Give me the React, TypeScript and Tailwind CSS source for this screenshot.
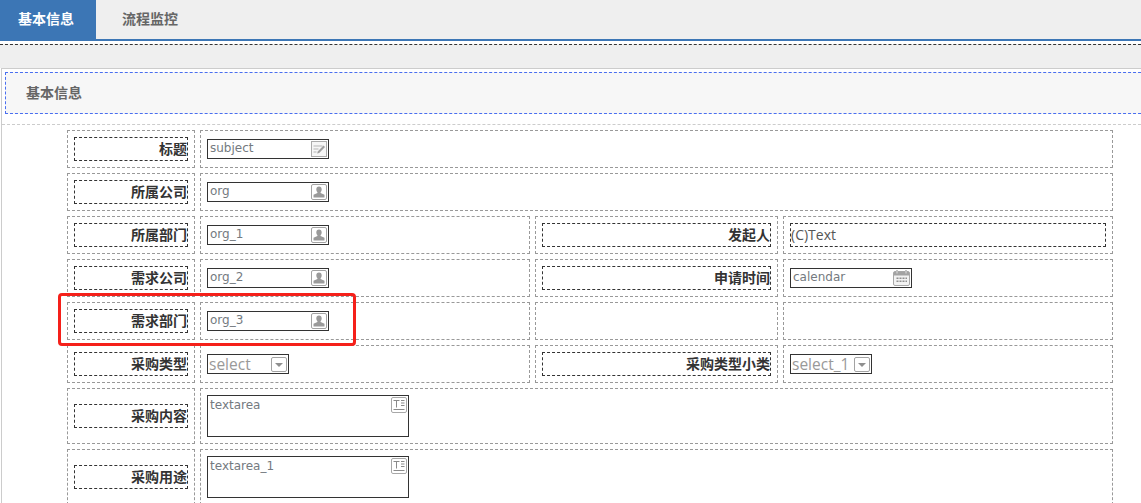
import React from 'react';

const CJK = '"Liberation Sans", "Noto Sans CJK SC", sans-serif';

const PersonIcon = () => (
  <svg width="16" height="16" viewBox="0 0 16 16" className="shrink-0">
    <rect x="0.5" y="0.5" width="15" height="15" rx="1.5" fill="#fff" stroke="#a3a3a3" />
    <path d="M8 2.500c-1.800 0-2.700 1.200-2.700 2.900 0 1.200.5 2.100 1.100 2.700v1L2.500 10.800v2.700h11v-2.700L9.600 9.100v-1c.6-.6 1.100-1.500 1.100-2.700C10.700 3.700 9.800 2.500 8 2.500z" fill="#9a9a9a" />
  </svg>
);

const EditIcon = () => (
  <svg width="16" height="16" viewBox="0 0 16 16" className="shrink-0">
    <rect x="0.5" y="0.5" width="15" height="15" fill="#f6f6f6" stroke="#ababab" />
    <path d="M2.500 5h9M2.500 8h5M2.500 11h3" stroke="#b5b5b5" strokeWidth="1" />
    <path d="M6 12.500l1-2.200L12.500 4.500 14 6l-5.800 6z" fill="#a0a0a0" />
  </svg>
);

const CalendarIcon = () => (
  <svg width="17" height="16" viewBox="0 0 17 16" className="shrink-0">
    <rect x="0.5" y="1.500" width="16" height="14" rx="1.500" fill="#f2f2f2" stroke="#a8a8a8" />
    <rect x="1" y="2" width="15" height="3.500" fill="#a3a3a3" />
    <rect x="3" y="0" width="2" height="3.500" fill="#c2c2c2" />
    <rect x="12" y="0" width="2" height="3.500" fill="#c2c2c2" />
    <path d="M3.500 7.500h2V9h-2zM6.500 7.500h2V9h-2zM9.500 7.500h2V9h-2zM12.500 7.500h1.500V9h-1.500zM3.500 10.500h2V12h-2zM6.500 10.500h2V12h-2zM9.500 10.500h2V12h-2zM12.500 10.500h1.500V12h-1.500z" fill="#8f8f8f" />
  </svg>
);

const SelectIcon = () => (
  <svg width="16" height="15" viewBox="0 0 16 15" className="shrink-0">
    <rect x="0.5" y="0.5" width="15" height="14" rx="1.500" fill="#fff" stroke="#a3a3a3" />
    <path d="M4 6h8l-4 4z" fill="#8f8f8f" />
  </svg>
);

const TextareaIcon = () => (
  <svg width="16" height="16" viewBox="0 0 16 16" className="shrink-0">
    <rect x="0.5" y="0.5" width="15" height="15" rx="1.500" fill="#fff" stroke="#a8a8a8" />
    <path d="M2.500 3.500h6M5.500 3.500v7M10 3.500h3.500M10 6h3.500M10 8.500h3.500M2.500 12.500h11" stroke="#8a8a8a" strokeWidth="1" fill="none" />
  </svg>
);

const Label = ({ children }: { children: React.ReactNode }) => (
  <div className="w-full h-[24px] border border-dashed border-[#333] flex items-center justify-end text-[14px] font-bold text-[#333] leading-none">
    {children}
  </div>
);

const LabelCell = ({ text, className = 'w-[128px] px-[6px]' }: { text: string; className?: string }) => (
  <div className={`${className} shrink-0 h-full border border-dashed border-[#999] flex items-center`}>
    <Label>{text}</Label>
  </div>
);

const FieldText = ({ children }: { children: React.ReactNode }) => (
  <span className="text-[12px] text-[#747a80] pl-[2px] pb-[2px] leading-none" style={{ fontFamily: '"DejaVu Sans", sans-serif' }}>
    {children}
  </span>
);

const Input = ({ text, icon }: { text: string; icon: React.ReactNode }) => (
  <div className="w-[122px] h-[20px] border border-[#333] flex items-center justify-between pr-px bg-white">
    <FieldText>{text}</FieldText>
    {icon}
  </div>
);

const Select = ({ text, width }: { text: string; width: string }) => (
  <div className={`${width} h-[20px] border border-[#333] flex items-center justify-between pr-px bg-white`}>
    <span className="text-[15.5px] text-[#999] pl-px pt-[2px] leading-none" style={{ fontFamily: '"Open Sans", sans-serif' }}>{text}</span>
    <SelectIcon />
  </div>
);

const Textarea = ({ text }: { text: string }) => (
  <div className="w-[202px] h-[42px] border border-[#333] flex justify-between pt-px pr-px bg-white">
    <span className="text-[12px] text-[#747a80] pl-[2px] pt-px leading-[14px]" style={{ fontFamily: '"DejaVu Sans", sans-serif' }}>{text}</span>
    <TextareaIcon />
  </div>
);

const ValueCell = ({ children, className }: { children?: React.ReactNode; className: string }) => (
  <div className={`${className} shrink-0 h-full border border-dashed border-[#999] flex items-center px-[6px]`}>{children}</div>
);

const Row = ({ children, height = 'h-[38px]' }: { children: React.ReactNode; height?: string }) => (
  <div className={`${height} flex gap-[5px]`}>{children}</div>
);

const FourCols = ({ label, value, label2, value2 }: { label: string; value: React.ReactNode; label2?: string; value2?: React.ReactNode }) => (
  <Row>
    <LabelCell text={label} />
    <ValueCell className="w-[330px]">{value}</ValueCell>
    {label2 ? (
      <LabelCell text={label2} className="w-[243px] px-[6px]" />
    ) : (
      <div className="w-[243px] shrink-0 h-full border border-dashed border-[#999]" />
    )}
    <ValueCell className="w-[330px]">{value2}</ValueCell>
  </Row>
);

export default function App() {
  return (
    <div className="relative w-[1141px] h-[503px] overflow-hidden bg-white" style={{ fontFamily: CJK }}>
      <div className="h-[41px] bg-[#efefef] border-b-2 border-[#3c76b5] flex">
        <div className="w-[96px] h-[39px] bg-[#3c76b5] text-white text-[14px] font-bold flex items-center pl-[18px]">基本信息</div>
        <div className="w-[104px] h-[39px] text-[#666] text-[14px] font-bold flex items-center pl-[26px]">流程监控</div>
      </div>

      <div className="h-[27px] bg-[#efefef] pt-[3px] bg-clip-content">
        <div className="border-t border-dashed border-[#333]" />
      </div>

      <div className="ml-px w-[1160px] border-t border-l border-[#ccc] bg-white h-[435px] pt-[3px] pl-[3px]">
        <div className="h-[42px] bg-[#f7f7f7] border border-dashed border-[#4a6ff0] flex items-center pl-[20px] text-[14px] font-bold text-[#666]">基本信息</div>
        <div className="mt-[10px] -ml-[3px] border-t border-dashed border-[#ccc] pt-[5px] pl-[65px] flex flex-col gap-[5px]">
          <Row>
            <LabelCell text="标题" />
            <ValueCell className="w-[913px]"><Input text="subject" icon={<EditIcon />} /></ValueCell>
          </Row>
          <Row>
            <LabelCell text="所属公司" />
            <ValueCell className="w-[913px]"><Input text="org" icon={<PersonIcon />} /></ValueCell>
          </Row>
          <FourCols
            label="所属部门"
            value={<Input text="org_1" icon={<PersonIcon />} />}
            label2="发起人"
            value2={
              <div className="w-full h-[24px] border border-dashed border-[#333] flex items-center text-[14px] text-[#555] pb-px" style={{ fontFamily: '"Open Sans", sans-serif' }}>(C)Text</div>
            }
          />
          <FourCols
            label="需求公司"
            value={<Input text="org_2" icon={<PersonIcon />} />}
            label2="申请时间"
            value2={<Input text="calendar" icon={<CalendarIcon />} />}
          />
          <FourCols label="需求部门" value={<Input text="org_3" icon={<PersonIcon />} />} />
          <FourCols
            label="采购类型"
            value={<Select text="select" width="w-[82px]" />}
            label2="采购类型小类"
            value2={<Select text="select_1" width="w-[82px]" />}
          />
          <Row height="h-[56px]">
            <LabelCell text="采购内容" />
            <ValueCell className="w-[913px]"><Textarea text="textarea" /></ValueCell>
          </Row>
          <Row height="h-[56px]">
            <LabelCell text="采购用途" />
            <ValueCell className="w-[913px]"><Textarea text="textarea_1" /></ValueCell>
          </Row>
        </div>
      </div>

      <div className="absolute left-[58px] top-[293px] w-[298px] h-[53px] border-[3px] border-[#f5201a] rounded-[4px]" />
    </div>
  );
}
